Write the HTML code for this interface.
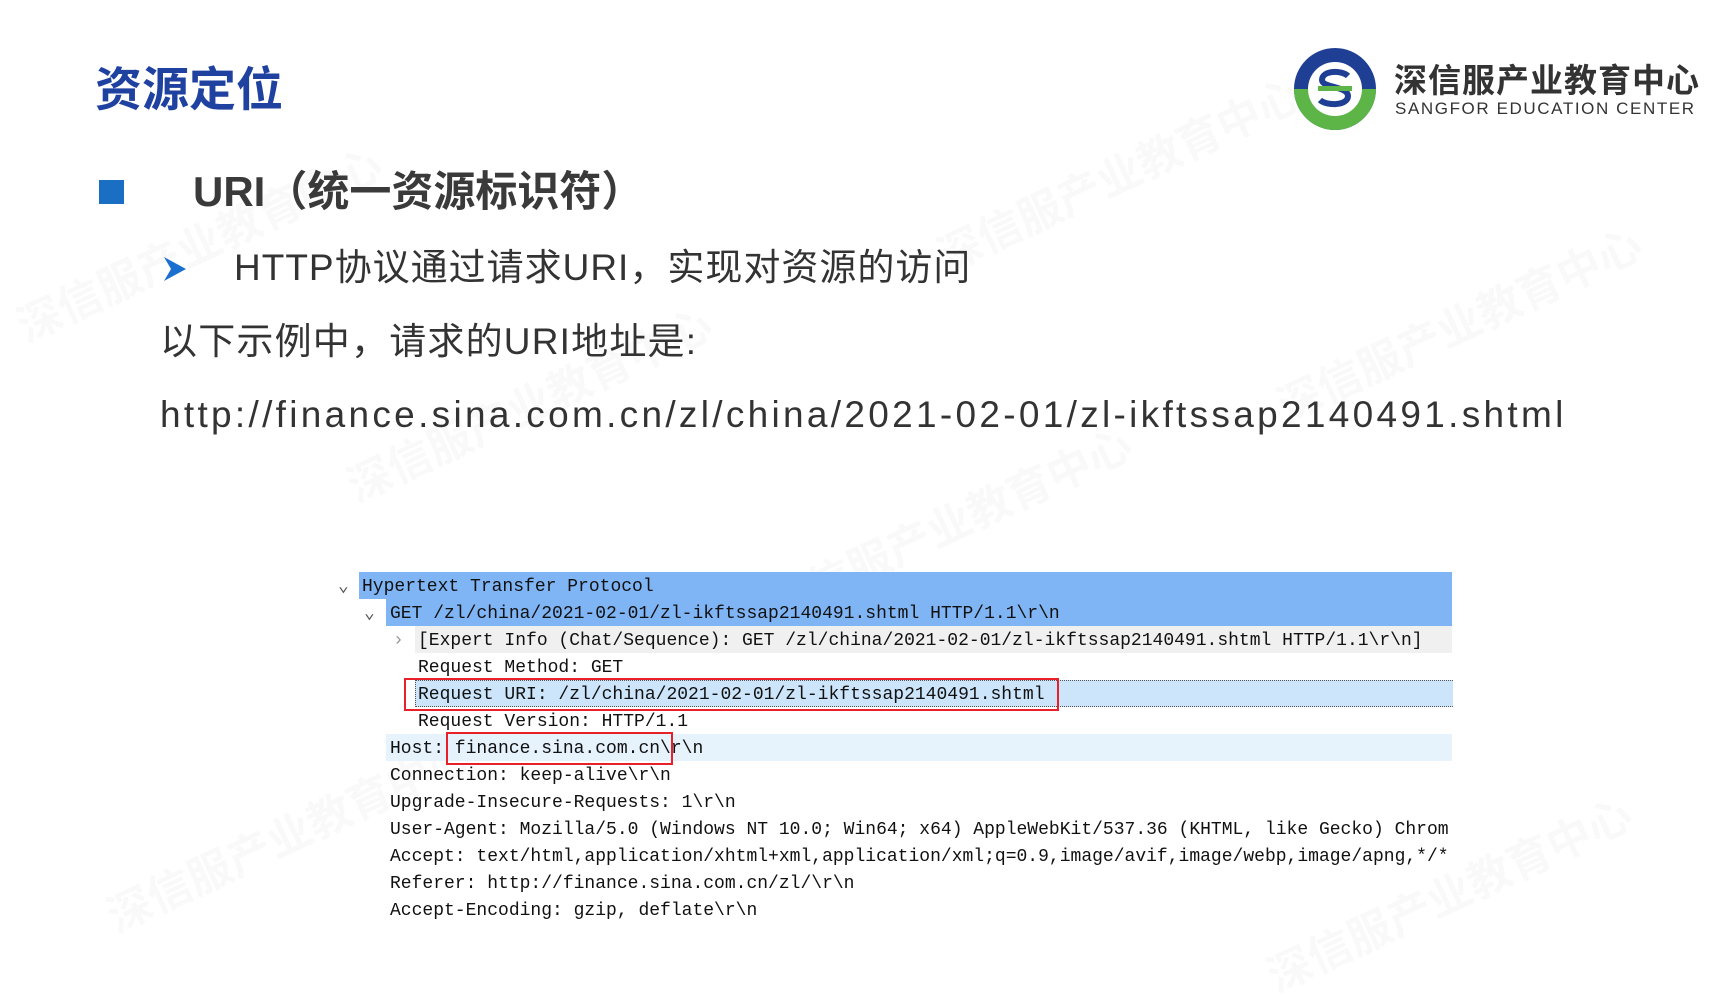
<!DOCTYPE html>
<html><head><meta charset="utf-8"><style>
body{margin:0;width:1733px;height:975px;background:#fff;position:relative;overflow:hidden;font-family:"Liberation Sans","Noto Sans CJK SC",sans-serif;}
.a{position:absolute;white-space:nowrap;}
.wm{position:absolute;color:rgba(0,0,0,0.025);font-size:44px;font-weight:bold;transform:rotate(-25deg);white-space:nowrap;font-family:"Noto Sans CJK SC",sans-serif}
.mono{font-family:"Liberation Mono","DejaVu Sans Mono",monospace;font-size:18px;color:#111;}
.row{position:absolute;height:27px;line-height:30px;white-space:pre;}
</style></head><body>
<div class="wm" style="left:0;top:210px">深信服产业教育中心</div>
<div class="wm" style="left:920px;top:140px">深信服产业教育中心</div>
<div class="wm" style="left:1260px;top:290px">深信服产业教育中心</div>
<div class="wm" style="left:330px;top:370px">深信服产业教育中心</div>
<div class="wm" style="left:750px;top:490px">深信服产业教育中心</div>
<div class="wm" style="left:90px;top:800px">深信服产业教育中心</div>
<div class="wm" style="left:1250px;top:860px">深信服产业教育中心</div>

<div class="a" style="left:95px;top:56px;font-size:47px;font-weight:bold;color:#1f41a0;font-family:'Noto Sans CJK SC',sans-serif;line-height:60px">资源定位</div>

<svg class="a" style="left:1292px;top:46px" width="86" height="86" viewBox="0 0 86 86">
<circle cx="43" cy="43" r="41" fill="#1f3f94"/>
<path d="M2 43 A41 41 0 0 0 84 43 Z" fill="#5cb546"/>
<circle cx="43" cy="43" r="27" fill="#fff"/>
<path d="M56 30 C50 24 30 24 30 34 C30 42 56 40 56 50 C56 60 34 60 28 54" fill="none" stroke="#1f3f94" stroke-width="6"/>
<rect x="26" y="40" width="34" height="5" fill="#5cb546"/>
</svg>
<div class="a" style="left:1394px;top:58px;font-size:33px;font-weight:bold;color:#333;font-family:'Noto Sans CJK SC',sans-serif;line-height:40px;letter-spacing:1px">深信服产业教育中心</div>
<div class="a" style="left:1395px;top:99px;font-size:17px;color:#333;letter-spacing:1.6px;line-height:20px">SANGFOR EDUCATION CENTER</div>

<div class="a" style="left:99px;top:180px;width:25px;height:24px;background:#1a6fc4"></div>
<div class="a" style="left:193px;top:164px;font-size:42px;font-weight:bold;color:#3a3a3a;line-height:56px">URI（统一资源标识符）</div>

<svg class="a" style="left:163px;top:256px" width="24" height="26" viewBox="0 0 24 26"><path d="M1 1 L23 13 L1 25 L8 13 Z" fill="#1a6fd0"/></svg>
<div class="a" style="left:234px;top:244px;font-size:37px;color:#333;line-height:48px;letter-spacing:1px">HTTP协议通过请求URI，实现对资源的访问</div>
<div class="a" style="left:160px;top:318px;font-size:37px;color:#333;line-height:48px;letter-spacing:1.2px">以下示例中，请求的URI地址是:</div>
<div class="a" style="left:160px;top:391px;font-size:37px;color:#333;line-height:48px;letter-spacing:3.3px">http://finance.sina.com.cn/zl/china/2021-02-01/zl-ikftssap2140491.shtml</div>

<div class="mono">
<div class="row" style="left:359px;top:572px;width:1093px;background:#80b5f5"></div>
<div class="row" style="left:386px;top:599px;width:1066px;background:#80b5f5"></div>
<div class="row" style="left:415px;top:626px;width:1037px;background:#f0f0f0"></div>
<div class="row" style="left:415px;top:680px;width:1037px;height:25px;background:#cce5fa;border:1px dotted #555;border-right:none"></div>
<div class="row" style="left:386px;top:734px;width:1066px;background:#e6f2fc"></div>
<div class="row" style="left:338px;top:572px;color:#555">⌄</div>
<div class="row" style="left:364px;top:599px;color:#555">⌄</div>
<div class="row" style="left:393px;top:626px;color:#999">›</div>
<div class="row" style="left:362px;top:572px">Hypertext Transfer Protocol</div>
<div class="row" style="left:390px;top:599px">GET /zl/china/2021-02-01/zl-ikftssap2140491.shtml HTTP/1.1\r\n</div>
<div class="row" style="left:418px;top:626px">[Expert Info (Chat/Sequence): GET /zl/china/2021-02-01/zl-ikftssap2140491.shtml HTTP/1.1\r\n]</div>
<div class="row" style="left:418px;top:653px">Request Method: GET</div>
<div class="row" style="left:418px;top:680px">Request URI: /zl/china/2021-02-01/zl-ikftssap2140491.shtml</div>
<div class="row" style="left:418px;top:707px">Request Version: HTTP/1.1</div>
<div class="row" style="left:390px;top:734px">Host: finance.sina.com.cn\r\n</div>
<div class="row" style="left:390px;top:761px">Connection: keep-alive\r\n</div>
<div class="row" style="left:390px;top:788px">Upgrade-Insecure-Requests: 1\r\n</div>
<div class="row" style="left:390px;top:815px;width:1062px;overflow:hidden">User-Agent: Mozilla/5.0 (Windows NT 10.0; Win64; x64) AppleWebKit/537.36 (KHTML, like Gecko) Chrom</div>
<div class="row" style="left:390px;top:842px;width:1062px;overflow:hidden">Accept: text/html,application/xhtml+xml,application/xml;q=0.9,image/avif,image/webp,image/apng,*/*</div>
<div class="row" style="left:390px;top:869px">Referer: http://finance.sina.com.cn/zl/\r\n</div>
<div class="row" style="left:390px;top:896px">Accept-Encoding: gzip, deflate\r\n</div>
</div>
<div class="a" style="left:404px;top:678px;width:651px;height:29px;border:2px solid #e8202a"></div>
<div class="a" style="left:446px;top:732px;width:223px;height:29px;border:2px solid #e8202a"></div>
</body></html>
